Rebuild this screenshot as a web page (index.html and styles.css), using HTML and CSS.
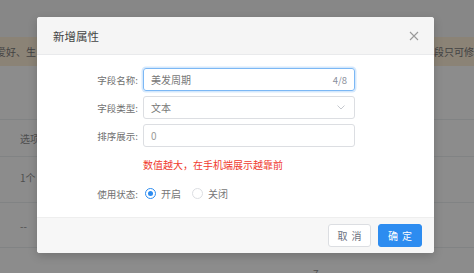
FILE: index.html
```html
<!DOCTYPE html>
<html lang="zh-CN">
<head>
<meta charset="utf-8">
<title>新增属性</title>
<link rel="stylesheet" href="styles.css">
</head>
<body>
<div class="page">
  <div class="topbar"></div>
  <div class="alert">
    <span class="alert-left">爱好、生日</span>
    <span class="alert-right">段只可修改</span>
  </div>
  <div class="toolbar"></div>
  <div class="table">
    <div class="tr th"><span class="c1">选项</span><span class="c2"></span></div>
    <div class="tr r1"><span class="c1">1个</span><span class="c2"></span></div>
    <div class="tr r2"><span class="c1">--</span><span class="c2"></span></div>
    <div class="tr r3"><span class="c1">--</span><span class="c2">7</span></div>
  </div>
</div>
<div class="mask"></div>
<div class="modal">
  <div class="modal-header">
    <span class="modal-title">新增属性</span>
    <svg class="close" width="10" height="10" viewBox="0 0 10 10"><path d="M1 1L9 9M9 1L1 9" stroke="#9a9a9a" stroke-width="1.1" fill="none"/></svg>
  </div>
  <div class="modal-body">
    <div class="row">
      <label class="label">字段名称:</label>
      <div class="input focus"><span class="val">美发周期</span><span class="count">4/8</span></div>
    </div>
    <div class="row">
      <label class="label">字段类型:</label>
      <div class="input"><span class="val">文本</span>
        <svg class="arrow" width="8" height="5" viewBox="0 0 8 5"><path d="M0.5 0.5L4 4L7.5 0.5" stroke="#c5c8ce" stroke-width="1" fill="none"/></svg>
      </div>
    </div>
    <div class="row">
      <label class="label">排序展示:</label>
      <div class="input"><span class="val light">0</span></div>
    </div>
    <div class="tip">数值越大，在手机端展示越靠前</div>
    <div class="row radio-row">
      <label class="label">使用状态:</label>
      <div class="radios">
        <span class="radio on"></span><span class="rtext">开启</span>
        <span class="radio"></span><span class="rtext">关闭</span>
      </div>
    </div>
  </div>
  <div class="modal-footer">
    <button class="btn">取 消</button>
    <button class="btn primary">确 定</button>
  </div>
</div>
</body>
</html>
```

FILE: styles.css
```css
* { box-sizing: border-box; }
html, body { margin: 0; padding: 0; }
body {
  width: 474px;
  height: 273px;
  overflow: hidden;
  background: #fff;
  font-family: "Noto Sans CJK SC", "Noto Sans", sans-serif;
  position: relative;
}
.page { width: 474px; height: 273px; overflow: hidden; background: #fff; }
.topbar { height: 37px; background: #f6f6f6; }
.alert {
  height: 29px;
  background: #fdeed8;
  display: flex;
  justify-content: space-between;
  align-items: center;
  overflow: hidden;
  font-size: 10px;
  color: #7a7a7a;
  white-space: nowrap;
}
.alert-left { margin-left: -4px; }
.alert-right { margin-right: -10px; }
.toolbar { height: 54px; background: #fff; border-bottom: 1px solid #eceef1; }
.table { font-size: 10px; color: #8f8f8f; }
.tr { display: flex; align-items: center; border-bottom: 1px solid #eceef1; }
.th { height: 37px; }
.r1 { height: 46px; padding-bottom: 4px; }
.r2 { height: 45px; }
.r3 { height: 40px; align-items: flex-end; padding-bottom: 6px; }
.c1 { width: 292px; padding-left: 20px; }
.c2 { flex: 1; padding-left: 21px; }
.mask {
  position: absolute;
  inset: 0;
  background: rgba(0, 0, 0, 0.45);
}
.modal {
  position: absolute;
  left: 37px;
  top: 17px;
  width: 397px;
  height: 236px;
  background: #fff;
  border-radius: 3px;
  overflow: hidden;
  box-shadow: 0 3px 10px rgba(0, 0, 0, 0.18);
  display: flex;
  flex-direction: column;
}
.modal-header {
  height: 38px;
  flex: none;
  background: #f5f5f5;
  border-bottom: 1px solid #e9eaec;
  display: flex;
  align-items: center;
  justify-content: space-between;
  padding: 0 15px 0 16px;
}
.modal-title { font-size: 11.5px; color: #444; }
.close { display: block; margin-top: 1px; }
.modal-body {
  flex: 1;
  padding-top: 13px;
}
.row {
  display: flex;
  align-items: center;
  height: 23px;
  margin-bottom: 5px;
}
.label {
  width: 101px;
  text-align: right;
  font-size: 9.5px;
  color: #707070;
  margin-right: 5px;
}
.input {
  width: 212px;
  height: 23px;
  border: 1px solid #dcdee2;
  border-radius: 3px;
  display: flex;
  align-items: center;
  justify-content: space-between;
  padding: 0 7px;
  font-size: 10px;
  color: #777;
}
.input.focus {
  border-color: #7cb8f5;
  box-shadow: 0 0 0 1.5px rgba(45, 140, 240, 0.2);
}
.val.light { color: #999; }
.count { color: #8a8f9c; font-size: 9.5px; }
.arrow { display: block; margin-right: 2px; }
.tip {
  margin: 11px 0 0 106px;
  font-size: 10px;
  line-height: 14px;
  color: #f03a2e;
}
.radio-row { margin-top: 10px; }
.radios { display: flex; align-items: center; font-size: 10px; color: #777; }
.radio {
  width: 11px;
  height: 11px;
  border-radius: 50%;
  border: 1px solid #dcdee2;
  margin-right: 5px;
  margin-left: 2px;
  position: relative;
  background: #fff;
}
.radio.on { border-color: #2d8cf0; }
.radio.on::after {
  content: "";
  position: absolute;
  left: 2px;
  top: 2px;
  width: 5px;
  height: 5px;
  border-radius: 50%;
  background: #2d8cf0;
}
.rtext { margin-right: 9px; }
.modal-footer {
  height: 36px;
  flex: none;
  background: #f7f7f7;
  border-top: 1px solid #eeeeee;
  display: flex;
  justify-content: flex-end;
  align-items: flex-start;
  padding: 6px 12px 0 0;
  gap: 7px;
}
.btn {
  height: 23px;
  width: 43px;
  padding: 0;
  border: 1px solid #dcdee2;
  border-radius: 3px;
  background: #fff;
  color: #6a7080;
  font-family: "Noto Sans CJK SC", "Noto Sans", sans-serif;
  font-size: 10px;
  word-spacing: 2px;
}
.btn.primary {
  width: 44px;
  background: #2d8cf0;
  border-color: #2d8cf0;
  color: #fff;
}
```
